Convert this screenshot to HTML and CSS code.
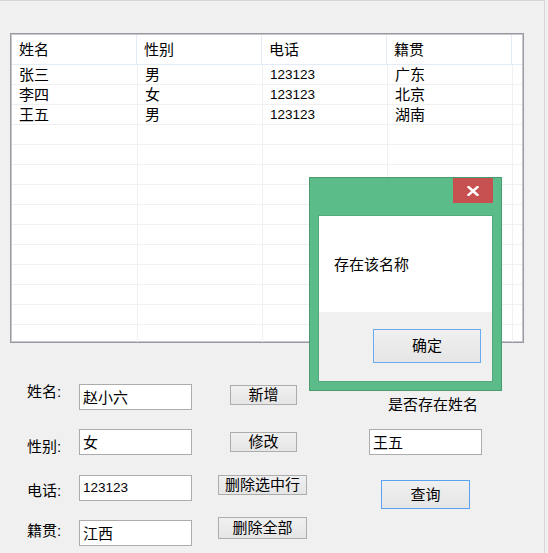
FILE: index.html
```html
<!DOCTYPE html>
<html lang="zh-CN">
<head>
    <meta charset="UTF-8">
    <title>通讯录</title>
    <link rel="stylesheet" href="styles.css">
</head>
<body>
    <div class="window">
        <div class="grid">
            <div class="grid-head">
                <span>姓名</span><span>性别</span><span>电话</span><span>籍贯</span><span></span>
            </div>
            <div class="grid-row"><span>张三</span><span>男</span><span class="num">123123</span><span>广东</span><span></span></div>
            <div class="grid-row"><span>李四</span><span>女</span><span class="num">123123</span><span>北京</span><span></span></div>
            <div class="grid-row"><span>王五</span><span>男</span><span class="num">123123</span><span>湖南</span><span></span></div>
            <div class="grid-row"><span></span><span></span><span></span><span></span><span></span></div>
            <div class="grid-row"><span></span><span></span><span></span><span></span><span></span></div>
            <div class="grid-row"><span></span><span></span><span></span><span></span><span></span></div>
            <div class="grid-row"><span></span><span></span><span></span><span></span><span></span></div>
            <div class="grid-row"><span></span><span></span><span></span><span></span><span></span></div>
            <div class="grid-row"><span></span><span></span><span></span><span></span><span></span></div>
            <div class="grid-row"><span></span><span></span><span></span><span></span><span></span></div>
            <div class="grid-row"><span></span><span></span><span></span><span></span><span></span></div>
            <div class="grid-row"><span></span><span></span><span></span><span></span><span></span></div>
            <div class="grid-row"><span></span><span></span><span></span><span></span><span></span></div>
            <div class="grid-row"><span></span><span></span><span></span><span></span><span></span></div>
        </div>

        <div class="editor">
            <label class="field-label">姓名:</label>
            <div class="textbox">赵小六</div>
            <button class="btn btn-short nudge-1">新增</button>

            <label class="field-label nudge-10">性别:</label>
            <div class="textbox">女</div>
            <button class="btn btn-short nudge-3">修改</button>

            <label class="field-label nudge-9">电话:</label>
            <div class="textbox num nudge-1">123123</div>
            <button class="btn btn-long nudge-1">删除选中行</button>

            <label class="field-label nudge-6">籍贯:</label>
            <div class="textbox nudge-3">江西</div>
            <button class="btn btn-long btn-tall">删除全部</button>

            <div class="search">
                <div class="search-label">是否存在姓名</div>
                <div class="textbox">王五</div>
                <button class="btn btn-search">查询</button>
            </div>
        </div>

        <div class="msgbox">
            <div class="msgbox-close">
                <svg width="12" height="10" viewBox="0 0 12 10">
                    <path d="M1.5 1 L10.5 9 M10.5 1 L1.5 9" stroke="#fff" stroke-width="2.4" stroke-linecap="square"/>
                </svg>
            </div>
            <div class="msgbox-panel">
                <div class="msgbox-body">存在该名称</div>
                <div class="msgbox-foot">
                    <button class="btn btn-ok">确定</button>
                </div>
            </div>
        </div>
    </div>
</body>
</html>
```

FILE: styles.css
```css
body {
    margin: 0;
    background: #f0f0f0;
    font-family: "Liberation Sans", "Noto Sans CJK SC", sans-serif;
    font-size: 15px;
    color: #000;
}

.window {
    position: relative;
    width: 544px;
    height: 552px;
    border-top: 1px solid #d6d6d6;
    border-right: 1px solid #d6d6d6;
    background: #f0f0f0;
}

/* data grid */
.grid {
    box-sizing: border-box;
    width: 514px;
    height: 310px;
    margin: 32px 0 0 10px;
    background: #fff;
    border: 1px solid #9a9aa2;
    box-shadow: inset 0 0 0 1px #c6c6cc;
    padding: 1px;
    overflow: hidden;
}

.grid-head, .grid-row {
    display: flex;
}

.grid-head span, .grid-row span {
    box-sizing: border-box;
    width: 125px;
    flex: none;
    padding-left: 7px;
    white-space: nowrap;
}

.grid-head span:last-child, .grid-row span:last-child {
    width: 12px;
}

.grid-head {
    height: 30px;
    line-height: 29px;
    border-bottom: 1px solid #e2ebf6;
    box-sizing: border-box;
}

.grid-head span {
    border-right: 1px solid #e2ebf6;
}

.grid-row {
    height: 20px;
    line-height: 19px;
    border-bottom: 1px solid #f0f0f0;
    box-sizing: border-box;
}

.grid-row span {
    border-right: 1px solid #f0f0f0;
}

.grid-row span:first-child {
    width: 126px;
}

.num {
    font-size: 13.5px;
}

/* edit controls below the grid */
.editor {
    display: grid;
    grid-template-columns: 52px 139px 151px 113px;
    grid-template-rows: 45px 45px 43px 36px;
    padding: 41px 0 0 27px;
}

.editor > * {
    align-self: start;
}

.field-label {
    line-height: 16px;
    white-space: nowrap;
}

.textbox {
    box-sizing: border-box;
    width: 113px;
    height: 26px;
    padding: 0 3px;
    line-height: 26px;
    background: #fff;
    border: 1px solid #acacac;
    white-space: nowrap;
}

.textbox.num {
    line-height: 24px;
}

.btn {
    box-sizing: border-box;
    margin: 0;
    padding: 0;
    font: inherit;
    line-height: 16px;
    color: #000;
    background: linear-gradient(#f0f0f0, #e5e5e5);
    border: 1px solid #adadad;
    border-radius: 0;
}

.btn-short {
    width: 67px;
    height: 20px;
    margin-left: 12px;
}

.btn-long {
    width: 89px;
    height: 20px;
}

.btn-tall {
    height: 22px;
}

.nudge-1 { margin-top: 1px; }
.nudge-3 { margin-top: 3px; }
.nudge-6 { margin-top: 6px; }
.nudge-9 { margin-top: 9px; }
.nudge-10 { margin-top: 10px; }

.search {
    grid-column: 4;
    grid-row: 1 / span 4;
    display: flex;
    flex-direction: column;
    align-items: flex-start;
}

.search-label {
    margin: 13px 0 0 19px;
    line-height: 16px;
    white-space: nowrap;
}

.search .textbox {
    margin-top: 16px;
}

.btn-search {
    width: 89px;
    height: 29px;
    margin: 25px 0 0 12px;
    border-color: #5aa2ee;
}

/* message box over the form */
.msgbox {
    position: absolute;
    left: 309px;
    top: 176px;
    box-sizing: border-box;
    width: 193px;
    height: 214px;
    padding: 37px 8px 0;
    background: #5bbc8a;
    border: 1px solid #4b9b71;
}

.msgbox-close {
    position: absolute;
    top: 0;
    right: 8px;
    width: 40px;
    height: 25px;
    background: #c75050;
    display: flex;
    align-items: center;
    justify-content: center;
}

.msgbox-panel {
    box-sizing: border-box;
    height: 167px;
    border: 1px solid #52a97c;
    background: #f0f0f0;
}

.msgbox-body {
    height: 96px;
    padding: 41px 0 0 15px;
    box-sizing: border-box;
    line-height: 16px;
    background: #fff;
}

.msgbox-foot {
    padding: 17px 0 0 54px;
}

.btn-ok {
    width: 108px;
    height: 34px;
    border-color: #6aaaf0;
}
```
